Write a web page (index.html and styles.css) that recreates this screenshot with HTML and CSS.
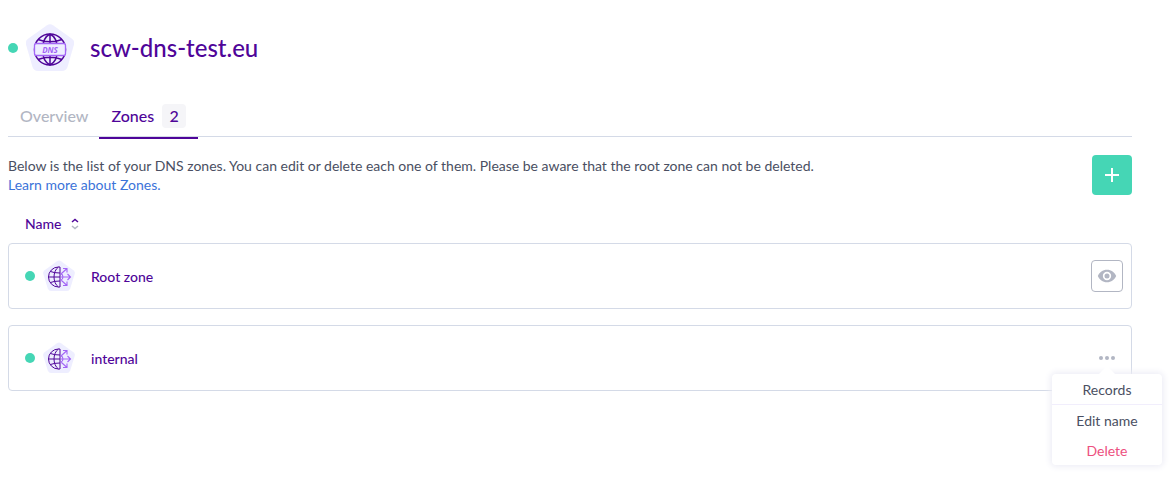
FILE: index.html
```html
<!DOCTYPE html>
<html lang="en">
<head>
<meta charset="utf-8">
<title>scw-dns-test.eu – Zones</title>
<link rel="stylesheet" href="styles.css">
</head>
<body>
<svg class="defs" aria-hidden="true">
  <symbol id="zone-icon" viewBox="0 0 32 32">
    <path fill="#eeeeff" d="M14 1.200Q16 -.2 18 1.200L30.400 10.200Q32.400 11.700 31.700 14L27.200 28.500Q26.300 31 23.800 31H8.200Q5.700 31 4.800 28.500L.3 14Q-.4 11.700 1.600 10.200Z"/>
    <g fill="none" stroke="#4f0599" stroke-width="1">
      <path d="M15.500 7A10 10 0 0 0 15.500 27H17V7ZM15.500 7C9.500 11 9.500 23 15.500 27M5.500 17H17M7.500 11.500Q11 13 17 13M7.500 22.500Q11 21 17 21"/>
    </g>
    <g fill="none" stroke="#a365f6" stroke-width="1.100">
      <path d="M17.500 13.500Q20 14.500 20 17T17.500 20.500M17.500 17H27M24.500 14L27.500 17L24.500 20M18.500 13.500L24 8.500M20 8.500H24V12.500M18.500 20.500L24 25.500M20 25.500H24V21.500"/>
    </g>
  </symbol>
</svg>
<main class="page">
  <header class="title">
    <span class="dot"></span>
    <svg class="title-icon" viewBox="0 0 48 48" aria-hidden="true">
      <path fill="#eeeeff" d="M21 1.300Q24 -.8 27 1.300L46 14.700Q49 17 48 20.500L41.500 43Q40 47 36 47H12Q8 47 6.500 43L0 20.500Q-1 17 2 14.700Z"/>
      <g fill="none" stroke="#4f0599" stroke-width="1.500">
        <circle cx="24" cy="25.500" r="15.500"/>
        <path d="M24 10V41M24 10C18 13 16.500 18 16.500 25.500S18 38 24 41C30 38 31.500 33 31.500 25.500S30 13 24 10M12 15.500Q24 20 36 15.500M12 35.500Q24 31 36 35.500"/>
      </g>
      <rect x="8.500" y="19.500" width="31" height="12" rx="2" fill="#eeeeff" stroke="#a365f6" stroke-width="1.300"/>
      <text class="icon-text" x="24" y="28.500" text-anchor="middle">DNS</text>
    </svg>
    <h1>scw-dns-test.eu</h1>
  </header>
  <nav class="tabs">
    <a class="tab" href="#overview">Overview</a>
    <a class="tab active" href="#zones" aria-current="page">Zones <span class="count">2</span></a>
  </nav>
  <section class="intro">
    <p>Below is the list of your DNS zones. You can edit or delete each one of them. Please be aware that the root zone can not be deleted.<br><a href="#learn">Learn more about Zones.</a></p>
    <button class="add" aria-label="Add zone"><svg width="16" height="16" viewBox="0 0 16 16"><path d="M8 1V15M1 8H15" stroke="#fff" stroke-width="2"/></svg></button>
  </section>
  <table class="zones">
    <thead><tr><th scope="col"><button class="sort">Name <svg width="8" height="12" viewBox="0 0 8 12" fill="none" stroke-width="1.500" aria-hidden="true"><path d="M1 4L4 1.500L7 4" stroke="#4f0599"/><path d="M1 8L4 10.500L7 8" stroke="#b2b6c3"/></svg></button></th></tr></thead>
    <tbody>
      <tr>
        <td class="name"><span class="dot"></span><svg class="zone-icon" aria-hidden="true"><use href="#zone-icon"/></svg>Root zone</td>
        <td class="action"><button class="view" aria-label="View zone"><svg width="20" height="20" viewBox="0 0 24 24"><path fill="#b2b6c3" fill-rule="evenodd" d="M12 4.500C7 4.500 2.700 7.600 1 12c1.700 4.400 6 7.500 11 7.500s9.300-3.100 11-7.500c-1.700-4.400-6-7.500-11-7.500zM12 17a5 5 0 1 1 0-10 5 5 0 0 1 0 10zm0-8a3 3 0 1 0 0 6 3 3 0 0 0 0-6z"/></svg></button></td>
      </tr>
      <tr>
        <td class="name"><span class="dot"></span><svg class="zone-icon" aria-hidden="true"><use href="#zone-icon"/></svg>internal</td>
        <td class="action"><button class="more" aria-label="More actions"><svg width="16" height="4" viewBox="0 0 16 4" fill="#b2b6c3"><circle cx="2" cy="2" r="2"/><circle cx="8" cy="2" r="2"/><circle cx="14" cy="2" r="2"/></svg></button>
          <div class="menu"><button>Records</button><button>Edit name</button><button class="danger">Delete</button></div>
        </td>
      </tr>
    </tbody>
  </table>
</main>
</body>
</html>
```
FILE: styles.css
```css
* { box-sizing: border-box; }
body {
  margin: 0;
  background: #fff;
  color: #4a4f62;
  font: 14px/19px Lato, "Noto Sans", sans-serif;
}
button { font: inherit; color: inherit; border: 0; padding: 0; background: none; cursor: pointer; }
a { color: #3b73d9; text-decoration: none; }
svg { display: block; flex: none; }
.defs { position: absolute; width: 0; height: 0; }
.page { min-height: 100vh; padding: 24px 43px 24px 8px; }
.dot { flex: none; width: 10px; height: 10px; border-radius: 50%; background: #45d6b5; }
.title { display: flex; align-items: center; height: 48px; }
.title-icon { width: 48px; height: 48px; margin: 0 16px 0 8px; }
.icon-text { font: italic bold 8px "Noto Sans", sans-serif; fill: #a365f6; }
h1 { margin: 0; color: #4f0599; font-size: 24px; line-height: 32px; font-weight: 500; }
.tabs { display: flex; height: 41px; margin-top: 24px; border-bottom: 1px solid #d4dae7; }
.tab { display: flex; align-items: center; height: 43px; padding: 0 11px 4px 12px; font-size: 16px; font-weight: 500; color: #b2b6c3; }
.tab.active { padding: 0 12px 2px; color: #4f0599; border-bottom: 2px solid #4f0599; }
.count { margin-left: 8px; width: 24px; border-radius: 4px; background: #f5f5f8; line-height: 24px; text-align: center; }
.intro { display: flex; justify-content: space-between; margin-top: 18px; }
.intro p { margin: 1px 0 0; }
.add { display: grid; place-items: center; flex: none; width: 40px; height: 40px; border-radius: 4px; background: #45d6b5; }
.zones, .zones tbody { display: flex; flex-direction: column; }
.zones { margin-top: 19px; border-spacing: 0; }
.zones thead { display: block; padding: 0 17px 10px; }
.zones th { padding: 0; }
.sort { display: flex; align-items: center; gap: 9px; color: #4f0599; font-weight: 500; }
.zones tbody { gap: 16px; }
.zones tbody tr { display: flex; align-items: center; justify-content: space-between; height: 66px; padding: 0 8px 0 16px; border: 1px solid #d4dae7; border-radius: 4px; }
.zones td { padding: 0; }
.name { display: flex; align-items: center; color: #4f0599; font-weight: 500; }
.zone-icon { width: 32px; height: 32px; margin: 0 16px 0 8px; }
.action { position: relative; }
.view, .more { display: grid; place-items: center; width: 32px; height: 32px; border-radius: 4px; }
.view { border: 1px solid #b2b6c3; }
.menu { position: absolute; top: 32px; left: 50%; width: 110px; margin-left: -55px; border-radius: 4px; background: #fff; box-shadow: 0 0 6px 2px #eeeef6; }
.menu::before { content: ""; position: absolute; top: -8px; left: 47px; border: solid transparent; border-width: 0 8px 8px; border-bottom-color: #fff; }
.menu button { display: block; width: 100%; height: 30px; }
.menu button:first-child { height: 31px; border-bottom: 1px solid #f1eefc; }
.menu .danger { color: #ed5080; }
```
